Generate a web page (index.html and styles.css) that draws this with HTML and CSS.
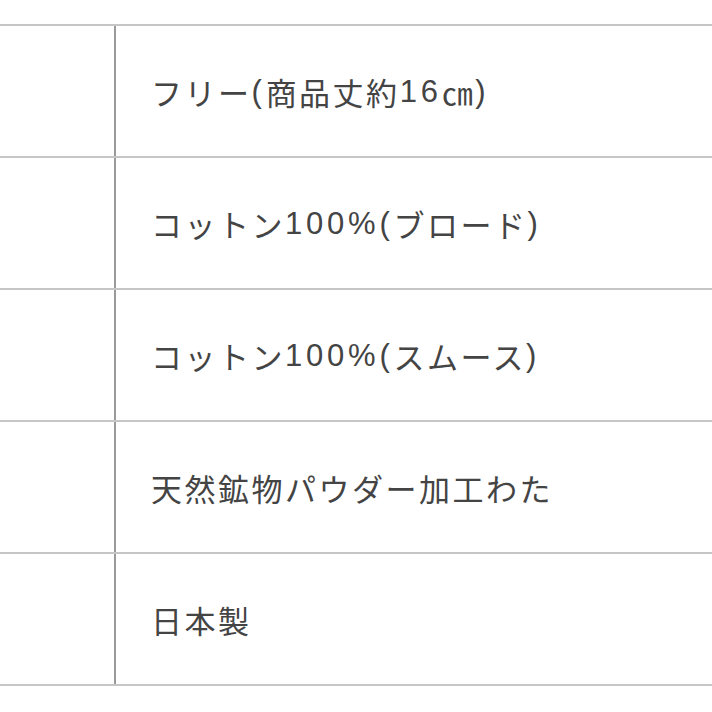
FILE: index.html
```html
<!DOCTYPE html>
<html lang="ja">
<head>
<meta charset="utf-8">
<link rel="stylesheet" href="styles.css">
</head>
<body>
<div class="spec">
  <div class="row"><div class="label"></div><div class="value">フリー<span class="en">(</span>商品丈約<span class="en">16</span>㎝<span class="en">)</span></div></div>
  <div class="row"><div class="label"></div><div class="value">コットン<span class="en">100%(</span>ブロード<span class="en">)</span></div></div>
  <div class="row"><div class="label"></div><div class="value">コットン<span class="en">100%(</span>スムース<span class="en">)</span></div></div>
  <div class="row"><div class="label"></div><div class="value">天然鉱物パウダー加工わた</div></div>
  <div class="row last"><div class="label"></div><div class="value">日本製</div></div>
</div>
</body>
</html>
```
FILE: styles.css
```css
html, body {
  margin: 0;
  padding: 0;
  background: #ffffff;
}
body {
  font-family: "Noto Sans CJK JP", sans-serif;
  color: #444444;
}
.spec {
  padding-top: 24px;
}
.row {
  display: grid;
  grid-template-columns: 116px 1fr;
  height: 132px;
  box-sizing: border-box;
  border-top: 2px solid #c6c6c6;
}
.row.last {
  border-bottom: 2px solid #c6c6c6;
  height: 134px;
}
.label {
  border-right: 2px solid #9a9a9a;
}
.value {
  display: flex;
  align-items: center;
  padding-left: 35px;
  padding-top: 1px;
  font-size: 31px;
  letter-spacing: 2.5px;
  white-space: nowrap;
}
.en {
  font-family: "Liberation Sans", "Noto Sans CJK JP", sans-serif;
  letter-spacing: 3.8px;
}
```
